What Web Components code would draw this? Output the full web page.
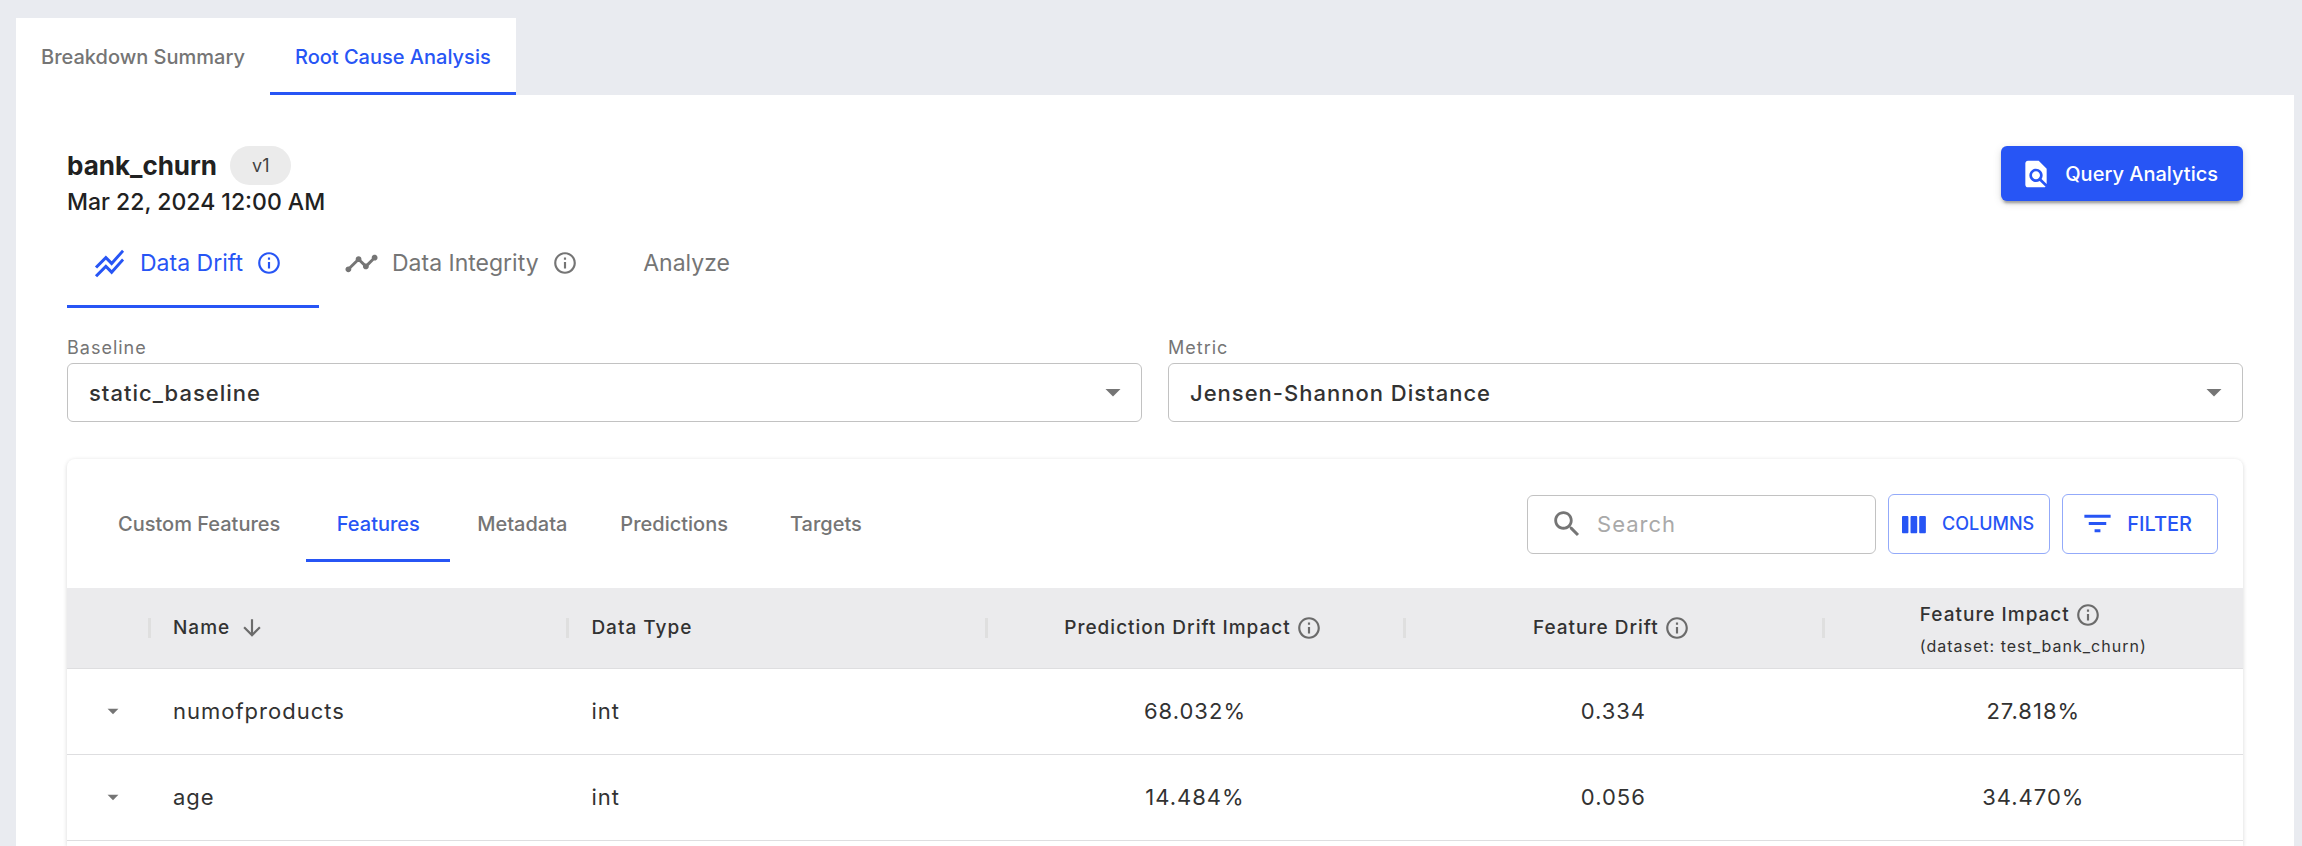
<!DOCTYPE html>
<html lang="en">
<head>
<meta charset="utf-8">
<title>Root Cause Analysis</title>
<style>
  html, body { margin: 0; }
  body {
    --blue: #2755f5;
    --ink: #323232;
    --muted: #757575;
    --outline: #c2c2c2;
    --rule: #dedee0;
    font-family: Inter, "Liberation Sans", sans-serif;
    font-size: 22px;
    line-height: 28px;
    color: var(--ink);
    background: #e9ebf0;
  }
</style>
</head>
<body>
<rca-page></rca-page>

<template id="t-page">
  <style>
    :host { display: flex; flex-direction: column; box-sizing: border-box; min-height: 100vh; padding: 18px 8px 0 16px; }
    .top { align-self: flex-start; background: #fff; --tab-pad: 25px; }
    main { flex: 1; display: flex; flex-direction: column; background: #fff; padding: 51px 51px 0; }
    model-header { margin-bottom: 5px; }
    .selects { display: grid; grid-template-columns: 1fr 1fr; gap: 26px; margin: 28px 0 37px; }
    data-card { flex: 1; }
  </style>
  <tab-bar class="top" aria-label="Views">
    <tab-item>Breakdown Summary</tab-item>
    <tab-item selected>Root Cause Analysis</tab-item>
  </tab-bar>
  <main>
    <model-header name="bank_churn" version="v1" date="Mar 22, 2024 12:00 AM"></model-header>
    <tab-bar aria-label="Analysis">
      <tab-item size="large" icon="drift" info selected>Data Drift</tab-item>
      <tab-item size="large" icon="timeline" info>Data Integrity</tab-item>
      <tab-item size="large">Analyze</tab-item>
    </tab-bar>
    <div class="selects">
      <select-field label="Baseline" value="static_baseline"></select-field>
      <select-field label="Metric" value="Jensen-Shannon Distance"></select-field>
    </div>
    <data-card></data-card>
  </main>
</template>

<template id="t-tab-bar">
  <style>:host { display: flex; }</style>
  <slot></slot>
</template>

<template id="t-tab-item">
  <style>
    :host { display: block; }
    button {
      display: flex; align-items: center; justify-content: center; gap: 13px;
      box-sizing: border-box; min-width: 144px; height: 77px; padding: 3px var(--tab-pad, 26px) 0;
      border: 0; border-bottom: 3px solid transparent; background: none;
      font: 500 20px/24px Inter, "Liberation Sans", sans-serif; color: var(--muted); cursor: pointer;
    }
    :host([size="large"]) button { font-size: 23px; font-weight: 400; line-height: 28px; height: 87px; padding-top: 0; }
    :host([info]) button { padding-left: 25px; padding-right: 37px; }
    :host([selected]) button { color: var(--blue); border-bottom-color: var(--blue); }
  </style>
  <button role="tab"><slot></slot></button>
</template>

<template id="t-model-header">
  <style>
    :host { display: flex; justify-content: space-between; align-items: flex-start; color: #212121; }
    .title { display: flex; align-items: center; gap: 13px; }
    h1 { margin: 0; font-size: 26px; line-height: 32px; font-weight: 700; }
    .chip { height: 39px; padding: 0 22px; border-radius: 20px; background: #ebebeb; font-size: 18px; line-height: 39px; color: #424242; }
    p { margin: 3px 0 0; font-size: 23px; font-weight: 500; }
    button {
      display: flex; align-items: center; gap: 13px; height: 55px; padding: 0 25px 0 19px;
      border: 0; border-radius: 6px; background: var(--blue); color: #fff;
      font: 500 20px/24px Inter, "Liberation Sans", sans-serif;
      box-shadow: 0 5px 2px -3px rgba(0,0,0,.2), 0 3px 3px rgba(0,0,0,.14), 0 2px 8px rgba(0,0,0,.12);
    }
  </style>
  <div>
    <div class="title"><h1></h1><span class="chip"></span></div>
    <p></p>
  </div>
  <button><mat-icon name="pageview" size="32"></mat-icon>Query Analytics</button>
</template>

<template id="t-select-field">
  <style>
    :host { display: block; }
    label { display: block; font-size: 18px; line-height: 24px; margin-bottom: 3px; color: var(--muted); letter-spacing: 1px; }
    .box { position: relative; }
    select {
      appearance: none; box-sizing: border-box; width: 100%; height: 59px; padding: 0 60px 0 21px;
      border: 1px solid var(--outline); border-radius: 6px; background: #fff;
      font: 500 22px/28px Inter, "Liberation Sans", sans-serif; color: var(--ink); letter-spacing: 1px;
    }
    mat-icon { position: absolute; right: 11px; top: 11px; color: var(--muted); pointer-events: none; }
  </style>
  <label for="s"></label>
  <div class="box"><select id="s"><option></option></select><mat-icon name="drop" size="36"></mat-icon></div>
</template>

<template id="t-data-card">
  <style>
    :host { display: block; background: #fff; border-radius: 8px 8px 0 0; box-shadow: 0 1px 4px rgba(0,0,0,.16); }
    .bar { display: flex; align-items: center; justify-content: space-between; height: 129px; padding: 0 25px; box-sizing: border-box; }
    .tools { display: flex; align-items: flex-end; gap: 12px; }
    .search {
      display: flex; align-items: center; gap: 13px; box-sizing: border-box; width: 349px; height: 59px; padding: 0 22px;
      border: 1px solid var(--outline); border-radius: 6px; color: var(--muted);
    }
    input { flex: 1; min-width: 0; border: 0; padding: 0; outline: 0; background: none; font: 400 22px/28px Inter, "Liberation Sans", sans-serif; color: var(--ink); letter-spacing: 1px; }
    input::placeholder { color: #a9a9a9; opacity: 1; }
    .tools button {
      display: flex; align-items: center; gap: 12px; box-sizing: border-box; height: 60px; padding: 0 15px 0 9px;
      border: 1px solid #93aafa; border-radius: 6px; background: none; color: var(--blue);
      font: 500 18px/24px Inter, "Liberation Sans", sans-serif;
    }
    .tools .filter { padding: 0 25px 0 17px; font-size: 20px; }
    table { width: 100%; table-layout: fixed; border-collapse: collapse; letter-spacing: 1px; }
    th, td { box-sizing: border-box; padding: 0 26px 0 22px; text-align: left; border-bottom: 1px solid var(--rule); }
    th { height: 80px; background: #ebebed; font-size: 19px; line-height: 24px; font-weight: 500; }
    td { height: 86px; font-weight: 400; }
    th:first-child, td:first-child { width: 84px; padding: 0 24px 0 33px; }
    .num { text-align: center; }
    th.num { padding-right: 30px; }
    th:last-child, td:last-child { padding-right: 23px; }
    .h { display: inline-flex; align-items: center; gap: 5px; }
    .sort { gap: 9px; }
    th mat-icon { color: #6b6b6b; }
    small { display: block; font-size: 16px; line-height: 24px; font-weight: 400; margin-top: 6px; }
    .stack { display: inline-block; text-align: left; padding-top: 4px; }
    .sep { background: linear-gradient(#dfdfdf, #dfdfdf) right center / 3px 20px no-repeat #ebebed; }
    .expand { display: block; padding: 0; border: 0; background: none; color: var(--muted); }
  </style>
  <div class="bar">
    <tab-bar aria-label="Feature groups">
      <tab-item>Custom Features</tab-item>
      <tab-item selected>Features</tab-item>
      <tab-item>Metadata</tab-item>
      <tab-item>Predictions</tab-item>
      <tab-item>Targets</tab-item>
    </tab-bar>
    <div class="tools">
      <div class="search"><mat-icon name="search" size="34"></mat-icon><input type="search" placeholder="Search" aria-label="Search"></div>
      <button><mat-icon name="columns" size="32"></mat-icon>COLUMNS</button>
      <button class="filter"><mat-icon name="filter" size="35"></mat-icon>FILTER</button>
    </div>
  </div>
  <table>
    <thead><tr>
      <th class="sep"></th>
      <th class="sep"><span class="h sort">Name <mat-icon name="down" size="26"></mat-icon></span></th>
      <th class="sep">Data Type</th>
      <th class="sep num"><span class="h">Prediction Drift Impact <mat-icon name="info" size="26"></mat-icon></span></th>
      <th class="sep num"><span class="h">Feature Drift <mat-icon name="info" size="26"></mat-icon></span></th>
      <th class="num"><span class="stack"><span class="h">Feature Impact <mat-icon name="info" size="26"></mat-icon></span><small>(dataset: test_bank_churn)</small></span></th>
    </tr></thead>
    <tbody></tbody>
  </table>
</template>

<script>
const ICONS = {
  info: 'M11 7h2v2h-2zm0 4h2v6h-2zm1-9C6.48 2 2 6.48 2 12s4.48 10 10 10 10-4.48 10-10S17.52 2 12 2zm0 18c-4.41 0-8-3.59-8-8s3.59-8 8-8 8 3.59 8 8-3.59 8-8 8z',
  timeline: 'M23 8c0 1.1-.9 2-2 2-.18 0-.35-.02-.51-.07l-3.56 3.55c.05.16.07.34.07.52 0 1.1-.9 2-2 2s-2-.9-2-2c0-.18.02-.36.07-.52l-2.55-2.55c-.16.05-.34.07-.52.07s-.36-.02-.52-.07l-4.55 4.56c.05.16.07.33.07.51 0 1.1-.9 2-2 2s-2-.9-2-2 .9-2 2-2c.18 0 .35.02.51.07l4.56-4.55C8.02 9.36 8 9.18 8 9c0-1.1.9-2 2-2s2 .9 2 2c0 .18-.02.36-.07.52l2.55 2.55c.16-.05.34-.07.52-.07s.36.02.52.07l3.55-3.56C19.02 8.35 19 8.18 19 8c0-1.1.9-2 2-2s2 .9 2 2z',
  drift: 'M2 19.99l7.5-7.51 4 4 7.09-7.97L22 9.92l-8.5 9.56-4-4-6 6.01-1.5-1.5zm1.5-4.5l6-6.01 4 4L22 3.92l-1.41-1.41-7.09 7.97-4-4L2 13.99l1.5 1.5z',
  pageview: 'M20 19.59V8l-6-6H6c-1.1 0-1.99.9-1.99 2L4 20c0 1.1.89 2 1.99 2H18c.45 0 .85-.15 1.19-.4l-4.43-4.43c-.8.52-1.74.83-2.76.83-2.76 0-5-2.24-5-5s2.24-5 5-5 5 2.24 5 5c0 1.02-.31 1.96-.83 2.75L20 19.59zM9 13c0 1.66 1.34 3 3 3s3-1.34 3-3-1.34-3-3-3-3 1.34-3 3z',
  drop: 'M7 10l5 5 5-5z',
  search: 'M15.5 14h-.79l-.28-.27C15.41 12.59 16 11.11 16 9.5 16 5.91 13.09 3 9.5 3S3 5.91 3 9.5 5.91 16 9.5 16c1.61 0 3.09-.59 4.23-1.57l.27.28v.79l5 4.99L20.49 19l-4.99-5zm-6 0C7.01 14 5 11.99 5 9.5S7.01 5 9.5 5 14 7.01 14 9.5 11.99 14 9.5 14z',
  columns: 'M3.8 6h3.2c.45 0 .8.35.8.8v11.4c0 .45-.35.8-.8.8H3.8c-.45 0-.8-.35-.8-.8V6.800c0-.45.35-.8.8-.8zm6.4 0h3.400c.45 0 .8.35.8.8v11.4c0 .45-.35.8-.8.8h-3.400c-.45 0-.8-.35-.8-.8V6.800c0-.45.35-.8.8-.8zm6.500 0h3.400c.45 0 .8.35.8.8v11.4c0 .45-.35.8-.8.8h-3.400c-.45 0-.8-.35-.8-.8V6.800c0-.45.35-.8.8-.8z',
  filter: 'M10 18h4v-2h-4v2zM3 6v2h18V6H3zm3 7h12v-2H6v2z',
  down: 'M20 12l-1.41-1.41L13 16.17V4h-2v12.17l-5.58-5.59L4 12l8 8 8-8z'
};
const stamp = (el, id) => {
  const root = el.attachShadow({ mode: 'open' });
  if (id) root.append(document.getElementById(id).content.cloneNode(true));
  return root;
};

customElements.define('mat-icon', class extends HTMLElement {
  connectedCallback() {
    if (this.shadowRoot) return;
    const s = this.getAttribute('size');
    stamp(this).innerHTML = `<style>:host{display:block;flex:none;width:${s}px;height:${s}px}svg{display:block;fill:currentColor}</style>
      <svg width="${s}" height="${s}" viewBox="0 0 24 24" aria-hidden="true"><path d="${ICONS[this.getAttribute('name')]}"/></svg>`;
  }
});

customElements.define('tab-bar', class extends HTMLElement {
  connectedCallback() {
    if (this.shadowRoot) return;
    stamp(this, 't-tab-bar');
    this.setAttribute('role', 'tablist');
  }
});

customElements.define('tab-item', class extends HTMLElement {
  connectedCallback() {
    if (this.shadowRoot) return;
    const button = stamp(this, 't-tab-item').querySelector('button');
    button.setAttribute('aria-selected', this.hasAttribute('selected'));
    const icon = (name, size) => {
      const i = document.createElement('mat-icon');
      i.setAttribute('name', name);
      i.setAttribute('size', size);
      return i;
    };
    if (this.hasAttribute('icon')) button.prepend(icon(this.getAttribute('icon'), 35));
    if (this.hasAttribute('info')) button.append(icon('info', 26));
  }
});

customElements.define('model-header', class extends HTMLElement {
  connectedCallback() {
    if (this.shadowRoot) return;
    const root = stamp(this, 't-model-header');
    root.querySelector('h1').textContent = this.getAttribute('name');
    root.querySelector('.chip').textContent = this.getAttribute('version');
    root.querySelector('p').textContent = this.getAttribute('date');
  }
});

customElements.define('select-field', class extends HTMLElement {
  connectedCallback() {
    if (this.shadowRoot) return;
    const root = stamp(this, 't-select-field');
    root.querySelector('label').textContent = this.getAttribute('label');
    root.querySelector('option').textContent = this.getAttribute('value');
  }
});

customElements.define('data-card', class extends HTMLElement {
  connectedCallback() {
    if (this.shadowRoot) return;
    const rows = [
      ['numofproducts', 'int', '68.032%', '0.334', '27.818%'],
      ['age', 'int', '14.484%', '0.056', '34.470%']
    ];
    stamp(this, 't-data-card').querySelector('tbody').innerHTML = rows.map(r =>
      `<tr><td><button class="expand" aria-label="Expand ${r[0]}"><mat-icon name="drop" size="26"></mat-icon></button></td>` +
      r.map((v, i) => `<td${i > 1 ? ' class="num"' : ''}>${v}</td>`).join('') + '</tr>').join('');
  }
});

customElements.define('rca-page', class extends HTMLElement {
  connectedCallback() {
    if (!this.shadowRoot) stamp(this, 't-page');
  }
});
</script>
</body>
</html>
